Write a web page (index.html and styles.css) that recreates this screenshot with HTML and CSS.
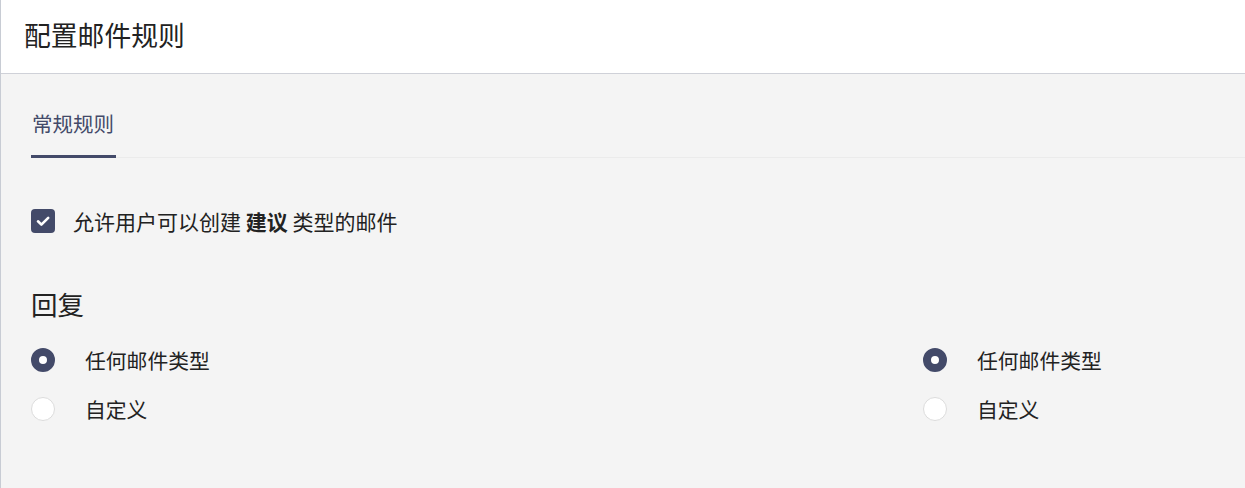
FILE: index.html
```html
<!DOCTYPE html>
<html lang="zh-CN">
<head>
<meta charset="utf-8">
<title>配置邮件规则</title>
<link rel="stylesheet" href="styles.css">
</head>
<body>
<div class="page">
  <header class="header">
    <h1 class="title">配置邮件规则</h1>
  </header>
  <main class="main">
    <nav class="tabs">
      <div class="tab active">常规规则</div>
    </nav>
    <label class="check-row">
      <span class="checkbox">
        <svg viewBox="0 0 24 24" width="24" height="24"><path d="M7 12.3l3.4 3.3L17.2 8.8" fill="none" stroke="#fff" stroke-width="2.6" stroke-linecap="round" stroke-linejoin="round"/></svg>
      </span>
      <span class="check-label">允许用户可以创建 <b>建议</b> 类型的邮件</span>
    </label>
    <h2 class="section-title">回复</h2>
    <div class="columns">
      <div class="radio-group">
        <div class="radio-row"><span class="radio checked"></span><span class="radio-label">任何邮件类型</span></div>
        <div class="radio-row"><span class="radio"></span><span class="radio-label">自定义</span></div>
      </div>
      <div class="radio-group">
        <div class="radio-row"><span class="radio checked"></span><span class="radio-label">任何邮件类型</span></div>
        <div class="radio-row"><span class="radio"></span><span class="radio-label">自定义</span></div>
      </div>
    </div>
  </main>
</div>
</body>
</html>
```
FILE: styles.css
```css
* { box-sizing: border-box; }
html, body { margin: 0; padding: 0; }
body {
  font-family: "Noto Sans CJK SC", "Noto Sans", sans-serif;
  color: #222;
  background: #f4f4f4;
}
.page {
  border-left: 1px solid #c8ccd4;
  min-height: 488px;
  background: #f4f4f4;
}
.header {
  height: 74px;
  background: #fff;
  border-bottom: 1px solid #cfd1d8;
  display: flex;
  align-items: center;
  padding: 0 0 4px 23px;
}
.title {
  margin: 0;
  font-size: 26.8px;
  font-weight: 400;
  line-height: 36px;
  color: #222;
}
.main {
  padding-left: 30px;
}
.tabs {
  display: flex;
  border-bottom: 1px solid #ebebeb;
}
.tab {
  font-size: 20.5px;
  line-height: 28px;
  padding: 35px 2px 18px 1px;
  color: #434a69;
  margin-bottom: -1px;
}
.tab.active {
  border-bottom: 3px solid #434a69;
}
.check-row {
  display: flex;
  align-items: center;
  gap: 18px;
  margin-top: 51px;
  height: 24px;
}
.checkbox {
  width: 24px;
  height: 24px;
  border-radius: 4px;
  background: #434a69;
  display: flex;
}
.check-label {
  font-size: 21px;
  line-height: 24px;
}
.check-label b { font-weight: 700; }
.section-title {
  margin: 53px 0 0;
  font-size: 26.5px;
  font-weight: 400;
  line-height: 36px;
}
.columns {
  display: grid;
  grid-template-columns: 892px 1fr;
  margin-top: 26px;
}
.radio-group {
  display: flex;
  flex-direction: column;
  gap: 25px;
}
.radio-row {
  display: flex;
  align-items: center;
  gap: 30px;
  height: 24px;
}
.radio {
  width: 24px;
  height: 24px;
  border-radius: 50%;
  background: #fff;
  border: 1px solid #dcdcdc;
  flex: none;
}
.radio.checked {
  background: #fff;
  border: 8px solid #434a69;
}
.radio-label {
  font-size: 20.8px;
  line-height: 24px;
}
```
